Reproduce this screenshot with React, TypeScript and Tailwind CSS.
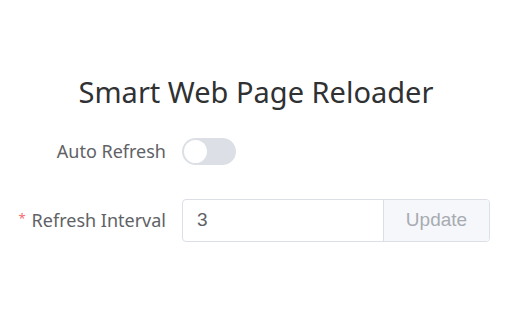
import React, { useState } from "react";

export default function App() {
  const [auto, setAuto] = useState(false);
  const [interval, setInterval] = useState("3");

  return (
    <div
      className="w-[512px] h-[320px] bg-white flex flex-col items-center"
      style={{ fontFamily: '"Noto Sans", "Open Sans", sans-serif' }}
    >
      <h1 className="mt-[72px] text-[29px] leading-[40px] text-[#303133] font-normal">
        Smart Web Page Reloader
      </h1>

      <div className="w-full mt-[25px] flex flex-col gap-[34px]">
        {/* Auto refresh */}
        <div className="flex items-center h-[28px]">
          <label className="w-[166px] text-right text-[18px] text-[#606266] mr-[16px]">
            Auto Refresh
          </label>
          <button
            onClick={() => setAuto(!auto)}
            className={`relative w-[54px] h-[27px] rounded-full transition-colors ${
              auto ? "bg-[#409eff]" : "bg-[#dcdfe6]"
            }`}
          >
            <span
              className={`absolute top-[2px] w-[23px] h-[23px] rounded-full bg-white transition-all ${
                auto ? "left-[29px]" : "left-[2px]"
              }`}
            />
          </button>
        </div>

        {/* Refresh interval */}
        <div className="flex items-center">
          <label className="w-[166px] flex items-center justify-end text-[18px] text-[#606266] mr-[16px]">
            <span className="text-[#f56c6c] text-[13px] mr-[6px] -mt-[4px]">*</span>
            Refresh Interval
          </label>
          <div
            className="flex h-[43px] w-[308px] border border-[#dcdfe6] rounded-[4px] overflow-hidden"
            style={{ fontFamily: '"Liberation Sans", Arial, sans-serif' }}
          >
            <input
              value={interval}
              onChange={(e) => setInterval(e.target.value)}
              className="flex-1 min-w-0 px-[14px] text-[19px] text-[#606266] outline-none"
            />
            <button className="w-[106px] border-l border-[#dcdfe6] bg-[#f5f7fa] text-[19px] text-[#a8abb2]">
              Update
            </button>
          </div>
        </div>
      </div>
    </div>
  );
}
